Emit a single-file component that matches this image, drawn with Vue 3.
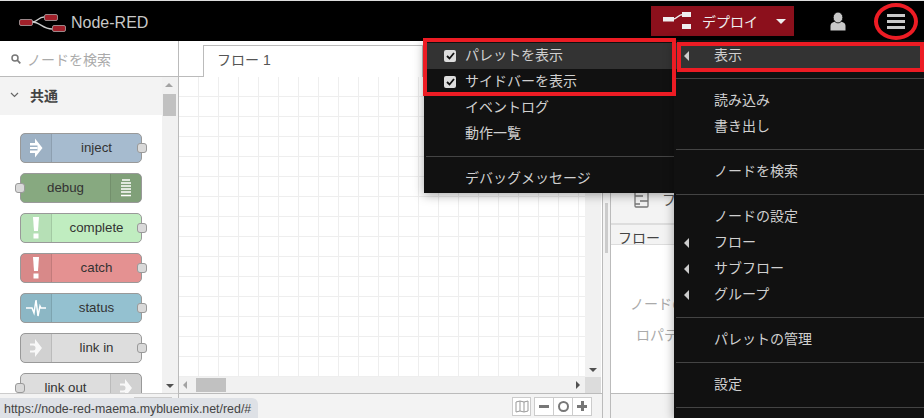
<script setup>
const nodes = [
  { label: 'inject', cls: 'inject', side: 'left', icon: 'arrow' },
  { label: 'debug', cls: 'debug', side: 'right', icon: 'list' },
  { label: 'complete', cls: 'complete', side: 'left', icon: 'bang' },
  { label: 'catch', cls: 'catch', side: 'left', icon: 'bang' },
  { label: 'status', cls: 'status', side: 'left', icon: 'pulse' },
  { label: 'link in', cls: 'link', side: 'left', icon: 'link' },
  { label: 'link out', cls: 'link', side: 'right', icon: 'link' }
]
const viewItems = [
  { label: 'パレットを表示', check: true, active: true },
  { label: 'サイドバーを表示', check: true },
  { label: 'イベントログ' },
  { label: '動作一覧' },
  { divider: true },
  { label: 'デバッグメッセージ' }
]
const mainItems = [
  { label: '表示', sub: true, active: true },
  { divider: true },
  { label: '読み込み' },
  { label: '書き出し' },
  { divider: true },
  { label: 'ノードを検索' },
  { divider: true },
  { label: 'ノードの設定' },
  { label: 'フロー', sub: true },
  { label: 'サブフロー', sub: true },
  { label: 'グループ', sub: true },
  { divider: true },
  { label: 'パレットの管理' },
  { divider: true },
  { label: '設定' },
  { divider: true }
]
</script>

<template>
  <div class="app">
    <header class="header">
      <div class="brand">
        <svg class="logo" width="48" height="18" viewBox="0 0 48 18">
          <path d="M13 8 C19 8 19 3 25 3 M13 8 C21 8 24 15 33 15" fill="none" stroke="#ccc" stroke-width="1.3" />
          <rect x="0.500" y="5.500" width="13" height="6" rx="1.500" fill="#a0202a" stroke="#bbb" stroke-width="0.700" />
          <rect x="25.500" y="0.500" width="13" height="6" rx="1.500" fill="#a0202a" stroke="#bbb" stroke-width="0.700" />
          <rect x="33.500" y="11.500" width="13" height="6" rx="1.500" fill="#a0202a" stroke="#bbb" stroke-width="0.700" />
        </svg>
        <span class="brand-name">Node-RED</span>
      </div>
      <div class="deploy">
        <svg width="28" height="18" viewBox="0 0 28 18">
          <rect x="0" y="5" width="11" height="4.5" fill="#eee" />
          <path d="M10 7 C14 7 15 2.5 20 2.5" fill="none" stroke="#eee" stroke-width="1.4" />
          <rect x="19" y="0" width="9" height="5" fill="#eee" />
          <rect x="19" y="12" width="9" height="5" fill="#eee" />
        </svg>
        <span class="deploy-label">デプロイ</span>
        <span class="caret"></span>
      </div>
      <svg class="user" width="16" height="19" viewBox="0 0 16 19">
        <path d="M0.500 18.500 V14 C0.500 10.500 4 9.500 8 9.500 C12 9.500 15.500 10.500 15.500 14 V18.500 Z" fill="#c8c8c8" />
        <ellipse cx="8" cy="5.500" rx="4.800" ry="5.400" fill="#c8c8c8" stroke="#000" stroke-width="0.800" />
      </svg>
      <div class="burger"><i></i><i></i><i></i></div>
    </header>

    <main class="main">
      <aside class="palette">
        <div class="search">
          <svg width="10" height="10" viewBox="0 0 10 10">
            <circle cx="4" cy="4" r="3" fill="none" stroke="#777" stroke-width="1.5" />
            <path d="M6.2 6.2 L9.3 9.3" stroke="#777" stroke-width="1.7" />
          </svg>
          <span>ノードを検索</span>
        </div>
        <div class="palette-body">
          <div class="palette-list">
            <div class="category">
              <svg width="9" height="6" viewBox="0 0 9 6"><path d="M1 1 L4.5 4.5 L8 1" fill="none" stroke="#666" stroke-width="1.2" /></svg>
              <span>共通</span>
            </div>
            <div class="nodes">
              <div v-for="n in nodes" :key="n.label" class="node" :class="[n.cls, n.side]">
                <span class="port"></span>
                <span class="node-icon">
                  <svg v-if="n.icon === 'arrow'" width="14" height="22" viewBox="0 0 14 22">
                    <path d="M6 1.500 L13.500 11 L6 20.500 V16 H1 V13.500 H8.500 V8.500 H1 V6 H6 Z" fill="#fff" />
                    <rect x="1" y="10" width="7.500" height="2" fill="#fff" />
                  </svg>
                  <svg v-else-if="n.icon === 'list'" width="12" height="18" viewBox="0 0 12 18">
                    <path d="M2 1 H10 M1 4 H11 M1 7 H11 M1 10 H11 M1 13 H11 M1 16.500 H11" stroke="#fff" stroke-width="1.3" />
                  </svg>
                  <svg v-else-if="n.icon === 'bang'" width="8" height="22" viewBox="0 0 8 22">
                    <path d="M1 0 H7 L6 14 H2 Z" fill="#fff" />
                    <rect x="1.500" y="16.500" width="5" height="5" fill="#fff" />
                  </svg>
                  <svg v-else-if="n.icon === 'pulse'" width="20" height="18" viewBox="0 0 20 18">
                    <path d="M0 9 H6 L8 14 L10 1 L12 17 L14 7 L15 9 H20" fill="none" stroke="#fff" stroke-width="1.500" />
                  </svg>
                  <svg v-else class="link-glyph" width="14" height="22" viewBox="0 0 14 22">
                    <path d="M6 2 L13 11 L6 20 V15.500 H1 V13.500 H4 A2.500 2.500 0 0 0 4 8.500 H1 V6.500 H6 Z" fill="#fff" />
                  </svg>
                </span>
                <span class="node-label">{{ n.label }}</span>
              </div>
            </div>
          </div>
          <div class="vbar palette-bar">
            <span class="arrow up"></span>
            <span class="thumb"></span>
            <span class="arrow down"></span>
          </div>
        </div>
        <div class="palette-foot"><span class="foot-btns"></span></div>
      </aside>

      <section class="workspace">
        <div class="tabs"><div class="tab">フロー 1</div></div>
        <div class="chart">
          <div class="canvas"></div>
          <div class="vbar chart-vbar"><span class="arrow down"></span></div>
          <div class="hbar">
            <span class="arrow left"></span>
            <span class="hthumb"></span>
            <span class="arrow right"></span>
          </div>
          <div class="corner"></div>
        </div>
        <div class="ws-footer">
          <span class="tool map">
            <svg width="14" height="13" viewBox="0 0 14 13">
              <path d="M1 2 L5 1 L9 2 L13 1 V11 L9 12 L5 11 L1 12 Z M5 1 V11 M9 2 V12" fill="none" stroke="#999" stroke-width="1" />
            </svg>
          </span>
          <span class="zoom-group">
            <span class="tool"><i class="minus"></i></span>
            <span class="tool"><i class="ring"></i></span>
            <span class="tool"><i class="minus"></i><i class="minus vert"></i></span>
          </span>
        </div>
      </section>

      <div class="separator"><span class="grip"></span></div>

      <aside class="sidebar">
        <div class="side-head">
          <svg width="15" height="18" viewBox="0 0 15 18">
            <rect x="1" y="1" width="13" height="16" rx="1" fill="none" stroke="#777" stroke-width="1.300" />
            <path d="M1 6 H9 M6 11 H14 M1 14 H6" stroke="#777" stroke-width="1.300" />
          </svg>
          <span>フロー</span>
        </div>
        <div class="side-tab">フロー</div>
        <div class="side-body">
          <p>ノードの情報</p>
          <p class="indent">ロパティ</p>
        </div>
        <div class="side-foot"></div>
      </aside>
    </main>

    <div class="status-url">https://node-red-maema.mybluemix.net/red/#</div>

    <nav class="menu view-menu">
      <template v-for="(it, i) in viewItems" :key="i">
        <hr v-if="it.divider" />
        <div v-else class="item" :class="{ active: it.active }">
          <span v-if="it.check" class="check">
            <svg width="9" height="8" viewBox="0 0 9 8"><path d="M1 4 L3.500 6.500 L8 1" fill="none" stroke="#111" stroke-width="1.800" /></svg>
          </span>
          {{ it.label }}
        </div>
      </template>
    </nav>

    <nav class="menu main-menu">
      <template v-for="(it, i) in mainItems" :key="i">
        <hr v-if="it.divider" />
        <div v-else class="item" :class="{ active: it.active }">
          <span v-if="it.sub" class="sub"></span>
          {{ it.label }}
        </div>
      </template>
    </nav>

    <div class="mark mark-view"></div>
    <div class="mark mark-main"></div>
    <div class="mark mark-burger"></div>
  </div>
</template>

<style>
html, body { margin: 0; background: #fff; }
</style>

<style scoped>
.app {
  position: relative;
  display: flex;
  flex-direction: column;
  width: 924px;
  height: 418px;
  overflow: hidden;
  font-family: "Liberation Sans", "Noto Sans CJK JP", sans-serif;
  color: #555;
}
.header {
  display: flex;
  align-items: center;
  flex: none;
  height: 40px;
  border-top: 1px solid #ddd;
  background: #000;
  box-sizing: content-box;
}
.brand { display: flex; align-items: center; padding: 4px 0 0 19px; }
.logo { display: block; }
.brand-name { margin-left: 4px; font-size: 16px; color: #c8c8c8; }
.deploy {
  display: flex;
  align-items: center;
  box-sizing: border-box;
  width: 143px;
  height: 30px;
  margin-left: auto;
  padding-left: 12px;
  background: #8c101c;
  color: #eee;
}
.deploy-label { margin-left: 11px; font-size: 14px; }
.caret {
  margin-left: 18px;
  border-top: 5px solid #eee;
  border-left: 5px solid transparent;
  border-right: 5px solid transparent;
}
.user { margin-left: 36px; }
.burger {
  display: flex;
  flex-direction: column;
  gap: 3px;
  width: 18px;
  margin: 0 19px 0 41px;
}
.burger i { display: block; height: 3px; background: #c8c8c8; }

.main { flex: 1; display: flex; min-height: 0; }

.palette {
  display: flex;
  flex-direction: column;
  flex: none;
  width: 178px;
  border-right: 1px solid #bbb;
}
.search {
  display: flex;
  align-items: center;
  gap: 6px;
  flex: none;
  height: 35px;
  padding-left: 11px;
  border-bottom: 1px solid #bbb;
  font-size: 14px;
  color: #aaa;
}
.palette-body { flex: 1; display: flex; min-height: 0; overflow: hidden; }
.palette-foot {
  display: flex;
  justify-content: flex-end;
  flex: none;
  box-sizing: border-box;
  height: 25px;
  padding: 3px 6px 0 0;
  background: #f3f3f3;
  border-top: 1px solid #ccc;
}
.foot-btns {
  box-sizing: border-box;
  width: 38px;
  height: 20px;
  border: 1px solid #ccc;
  background: #fff;
}
.palette-list { flex: 1; min-width: 0; overflow: hidden; }
.category {
  display: flex;
  align-items: center;
  gap: 11px;
  box-sizing: border-box;
  height: 38px;
  padding: 0 0 2px 10px;
  background: #f3f3f3;
  font-size: 14px;
  font-weight: 700;
  color: #444;
}
.nodes {
  display: flex;
  flex-direction: column;
  gap: 10px;
  padding: 18px 0 0 20px;
}
.node {
  position: relative;
  display: flex;
  flex: none;
  box-sizing: border-box;
  width: 122px;
  height: 30px;
  border: 1px solid #999;
  border-radius: 5px;
  font-size: 13.300px;
  color: #333;
}
.node.right { flex-direction: row-reverse; }
.node-icon {
  display: flex;
  align-items: center;
  justify-content: center;
  flex: none;
  width: 30px;
  background: rgba(0, 0, 0, 0.05);
  border-right: 1px solid rgba(0, 0, 0, 0.1);
}
.node.right .node-icon { border-right: 0; border-left: 1px solid rgba(0, 0, 0, 0.1); }
.node-label { flex: 1; text-align: center; line-height: 27px; }
.port {
  position: absolute;
  top: 9px;
  width: 8px;
  height: 8px;
  border: 1px solid #999;
  border-radius: 3px;
  background: #d9d9d9;
}
.node.left .port { right: -6px; }
.node.right .port { left: -6px; }
.inject { background: #a6bbcf; }
.debug { background: #87a980; }
.complete { background: #c0edc0; }
.catch { background: #e49191; }
.status { background: #94c1d0; }
.link { background: #ddd; }
.link-glyph { opacity: 0.85; }

.vbar {
  position: relative;
  flex: none;
  box-sizing: border-box;
  width: 16px;
  background: #f1f1f1;
}
.thumb {
  position: absolute;
  top: 17px;
  left: 1px;
  width: 13px;
  height: 22px;
  background: #c1c1c1;
}
.arrow { position: absolute; width: 0; height: 0; }
.arrow.up {
  top: 6px;
  left: 3px;
  border-bottom: 4px solid #a3a3a3;
  border-left: 4px solid transparent;
  border-right: 4px solid transparent;
}
.arrow.down {
  bottom: 5px;
  left: 4px;
  border-top: 4px solid #505050;
  border-left: 4px solid transparent;
  border-right: 4px solid transparent;
}
.arrow.left {
  top: 4px;
  left: 4px;
  border-right: 4px solid #a3a3a3;
  border-top: 4px solid transparent;
  border-bottom: 4px solid transparent;
}
.arrow.right {
  top: 4px;
  right: 5px;
  border-left: 4px solid #505050;
  border-top: 4px solid transparent;
  border-bottom: 4px solid transparent;
}

.workspace {
  display: flex;
  flex-direction: column;
  flex: none;
  width: 423px;
  border-right: 1px solid #bbb;
}
.tabs {
  display: flex;
  flex: none;
  box-sizing: border-box;
  height: 36px;
  padding: 4px 0 0 24px;
  border-bottom: 1px solid #bbb;
}
.tab {
  box-sizing: border-box;
  width: 220px;
  height: 32px;
  padding: 4px 0 0 13px;
  border: 1px solid #bbb;
  border-bottom: 0;
  background: #fff;
  font-size: 14px;
  line-height: 20px;
  color: #555;
}
.chart {
  flex: none;
  display: grid;
  grid-template-columns: 406px 16px;
  grid-template-rows: 300px 16px;
}
.canvas {
  background-color: #fff;
  background-image:
    repeating-linear-gradient(to right, transparent 0, transparent 19px, #eee 19px, #eee 20px),
    repeating-linear-gradient(to bottom, transparent 0, transparent 19px, #eee 19px, #eee 20px);
}
.hbar { position: relative; background: #f1f1f1; }
.hthumb {
  position: absolute;
  top: 1px;
  left: 17px;
  width: 30px;
  height: 14px;
  background: #c1c1c1;
}
.corner { background: #dcdcdc; }
.ws-footer {
  display: flex;
  align-items: center;
  justify-content: flex-end;
  flex: 1;
  min-height: 0;
  box-sizing: border-box;
  gap: 3px;
  padding-right: 10px;
  background: #f3f3f3;
  border-top: 1px solid #bbb;
}
.tool {
  position: relative;
  display: flex;
  align-items: center;
  justify-content: center;
  box-sizing: border-box;
  width: 20px;
  height: 19px;
  background: #fff;
  border: 1px solid #ccc;
}
.tool.map { width: 19px; }
.zoom-group { display: flex; }
.zoom-group .tool + .tool { margin-left: -1px; }
.minus { display: block; width: 10px; height: 3px; background: #777; }
.minus.vert { position: absolute; width: 3px; height: 10px; }
.ring {
  display: block;
  box-sizing: border-box;
  width: 11px;
  height: 11px;
  border: 2px solid #777;
  border-radius: 50%;
}

.separator {
  position: relative;
  flex: none;
  width: 7px;
  border-right: 1px solid #bbb;
  background: #f3f3f3;
}
.grip {
  position: absolute;
  top: 162px;
  left: 2px;
  width: 3px;
  height: 50px;
  background: #ccc;
}
.sidebar { flex: 1; display: flex; flex-direction: column; min-width: 0; overflow: hidden; }
.side-head {
  display: flex;
  align-items: center;
  gap: 13px;
  flex: none;
  height: 184px;
  padding: 134px 0 0 23px;
  box-sizing: border-box;
  background: #f3f3f3;
  font-size: 14px;
  border-bottom: 2px solid #ddd;
  white-space: nowrap;
}
.side-tab {
  flex: none;
  height: 20px;
  padding-left: 7px;
  font-size: 14px;
  line-height: 26px;
  color: #444;
  background: #f3f3f3;
  border-bottom: 1px solid #ddd;
  box-sizing: border-box;
  overflow: hidden;
}
.side-body {
  flex: 1;
  padding-top: 49px;
  padding-left: 19px;
  font-size: 14px;
  color: #aaa;
  white-space: nowrap;
}
.side-body p { margin: 0 0 11px; line-height: 20px; }
.side-body .indent { margin-left: 6px; }
.side-foot {
  flex: none;
  box-sizing: border-box;
  height: 25px;
  background: #f3f3f3;
  border-top: 1px solid #bbb;
}

.status-url {
  position: absolute;
  left: 0;
  bottom: 0;
  width: 258px;
  height: 20px;
  box-sizing: border-box;
  padding-left: 4px;
  background: #dee1e6;
  border-top-right-radius: 6px;
  font-size: 12.400px;
  line-height: 22px;
  color: #444;
  white-space: nowrap;
}

.menu {
  position: absolute;
  top: 40px;
  box-sizing: border-box;
  width: 250px;
  padding-top: 3px;
  background: #111;
  box-shadow: 0 2px 10px rgba(0, 0, 0, 0.35);
  font-size: 14px;
  color: #d0d0d0;
  font-family: "Noto Sans CJK JP", sans-serif;
}
.view-menu { left: 424px; height: 153px; }
.main-menu { left: 674px; height: 378px; }
.item {
  position: relative;
  height: 26px;
  line-height: 22px;
  white-space: nowrap;
}
.view-menu .item { padding-left: 41px; }
.main-menu .item { padding-left: 40px; }
.item.active { background: #333; }
.menu hr {
  height: 1px;
  margin: 9px 0 9px 2px;
  border: 0;
  background: #444;
}
.check {
  position: absolute;
  top: 7px;
  left: 20px;
  display: flex;
  align-items: center;
  justify-content: center;
  width: 12px;
  height: 12px;
  border-radius: 2px;
  background: #ddd;
}
.sub {
  position: absolute;
  top: 8px;
  left: 10px;
  border-right: 5px solid #ccc;
  border-top: 5px solid transparent;
  border-bottom: 5px solid transparent;
}

.mark { position: absolute; box-sizing: border-box; border: 4px solid #ed1c24; }
.mark-view { left: 423px; top: 38px; width: 253px; height: 58px; }
.mark-main { left: 677px; top: 42px; width: 247px; height: 30px; }
.mark-burger { left: 874px; top: 3px; width: 44px; height: 37px; border-radius: 50%; }
</style>
